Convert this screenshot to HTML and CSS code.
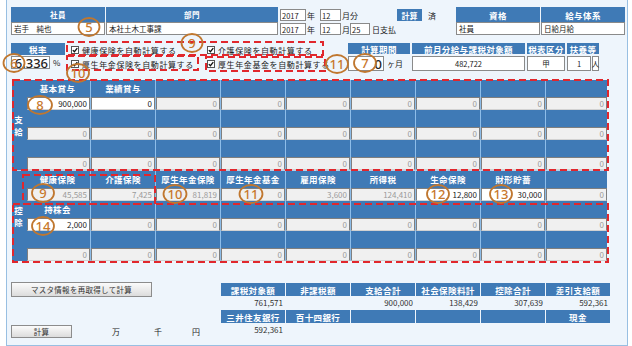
FILE: index.html
```html
<!DOCTYPE html>
<html lang="ja">
<head>
    <meta charset="UTF-8">
    <meta name="viewport" content="width=device-width, initial-scale=1.0">
    <title>給与入力</title>
    <link rel="stylesheet" href="styles.css">
</head>
<body>
<div class="frame">
    <div class="top">
        <div class="pair emp">
            <div class="hd sm">社員</div>
            <div class="hd sm">部門</div>
            <div class="val">岩手　純也</div>
            <div class="val">本社土木工事課</div>
        </div>
        <div class="dates">
            <div class="drow">
                <span class="box w26">2017</span><span class="unit w14">年</span><span class="box w21">12</span><span class="unit w56">月分</span><span class="tag">計算</span><span class="done">済</span>
            </div>
            <div class="drow">
                <span class="box w26">2017</span><span class="unit w14">年</span><span class="box w21">12</span><span class="unit w9">月</span><span class="box w20">25</span><span class="unit pl2">日支払</span>
            </div>
        </div>
        <div class="pair qual">
            <div class="hd">資格</div>
            <div class="hd">給与体系</div>
            <div class="val">社員</div>
            <div class="val">日給月給</div>
        </div>
    </div>

    <div class="mid">
        <div class="rate">
            <div class="hd">税率</div>
            <div class="rrow"><span class="box num w39">6.336</span><span class="pct">%</span></div>
        </div>
        <div class="checks">
            <label class="chk"><svg class="cb" viewBox="0 0 8 8"><rect x="0.5" y="0.5" width="7" height="7"/><path d="M1.8 4.1 L3.4 5.7 L6.3 2.2"/></svg>健康保険を自動計算する</label>
            <label class="chk"><svg class="cb" viewBox="0 0 8 8"><rect x="0.5" y="0.5" width="7" height="7"/><path d="M1.8 4.1 L3.4 5.7 L6.3 2.2"/></svg>介護保険を自動計算する</label>
            <label class="chk"><svg class="cb" viewBox="0 0 8 8"><rect x="0.5" y="0.5" width="7" height="7"/><path d="M1.8 4.1 L3.4 5.7 L6.3 2.2"/></svg>厚生年金保険を自動計算する</label>
            <label class="chk"><svg class="cb" viewBox="0 0 8 8"><rect x="0.5" y="0.5" width="7" height="7"/><path d="M1.8 4.1 L3.4 5.7 L6.3 2.2"/></svg>厚生年金基金を自動計算する</label>
        </div>
        <div class="period">
            <div class="hd">計算期間</div>
            <div class="hd">前月分給与課税対象額</div>
            <div class="hd">税表区分</div>
            <div class="hd">扶養等</div>
            <div class="prow"><span class="box num w36">0</span><span class="pl2">ヶ月</span></div>
            <div class="box cen">482,722</div>
            <div class="box cen">甲</div>
            <div class="prow"><span class="box cen w24">1</span><span class="box cen w7">人</span></div>
        </div>
    </div>

    <div class="panel">
        <div class="sec">
            <div class="side"><span>支</span><span>給</span></div>
            <div class="h">基本賞与</div><div class="h">業績賞与</div><div class="h"></div><div class="h"></div><div class="h"></div><div class="h"></div><div class="h"></div><div class="h"></div><div class="h"></div>
            <div class="c"><span class="f on">900,000</span></div><div class="c"><span class="f on">0</span></div><div class="c"><span class="f">0</span></div><div class="c"><span class="f">0</span></div><div class="c"><span class="f">0</span></div><div class="c"><span class="f">0</span></div><div class="c"><span class="f">0</span></div><div class="c"><span class="f">0</span></div><div class="c"><span class="f">0</span></div>
            <div class="h"></div><div class="h"></div><div class="h"></div><div class="h"></div><div class="h"></div><div class="h"></div><div class="h"></div><div class="h"></div><div class="h"></div>
            <div class="c"><span class="f">0</span></div><div class="c"><span class="f">0</span></div><div class="c"><span class="f">0</span></div><div class="c"><span class="f">0</span></div><div class="c"><span class="f">0</span></div><div class="c"><span class="f">0</span></div><div class="c"><span class="f">0</span></div><div class="c"><span class="f">0</span></div><div class="c"><span class="f">0</span></div>
            <div class="h"></div><div class="h"></div><div class="h"></div><div class="h"></div><div class="h"></div><div class="h"></div><div class="h"></div><div class="h"></div><div class="h"></div>
            <div class="c"><span class="f">0</span></div><div class="c"><span class="f">0</span></div><div class="c"><span class="f">0</span></div><div class="c"><span class="f">0</span></div><div class="c"><span class="f">0</span></div><div class="c"><span class="f">0</span></div><div class="c"><span class="f">0</span></div><div class="c"><span class="f">0</span></div><div class="c"><span class="f">0</span></div>
        </div>
        <div class="sec ded">
            <div class="side"><span>控</span><span>除</span></div>
            <div class="h">健康保険</div><div class="h">介護保険</div><div class="h">厚生年金保険</div><div class="h">厚生年金基金</div><div class="h">雇用保険</div><div class="h">所得税</div><div class="h">生命保険</div><div class="h">財形貯蓄</div><div class="h"></div>
            <div class="c"><span class="f">45,585</span></div><div class="c"><span class="f">7,425</span></div><div class="c"><span class="f">81,819</span></div><div class="c"><span class="f">0</span></div><div class="c"><span class="f">3,600</span></div><div class="c"><span class="f">124,410</span></div><div class="c"><span class="f on">12,800</span></div><div class="c"><span class="f on">30,000</span></div><div class="c"><span class="f">0</span></div>
            <div class="h">持株会</div><div class="h"></div><div class="h"></div><div class="h"></div><div class="h"></div><div class="h"></div><div class="h"></div><div class="h"></div><div class="h"></div>
            <div class="c"><span class="f on">2,000</span></div><div class="c"><span class="f">0</span></div><div class="c"><span class="f">0</span></div><div class="c"><span class="f">0</span></div><div class="c"><span class="f">0</span></div><div class="c"><span class="f">0</span></div><div class="c"><span class="f">0</span></div><div class="c"><span class="f">0</span></div><div class="c"><span class="f">0</span></div>
            <div class="h"></div><div class="h"></div><div class="h"></div><div class="h"></div><div class="h"></div><div class="h"></div><div class="h"></div><div class="h"></div><div class="h"></div>
            <div class="c"><span class="f">0</span></div><div class="c"><span class="f">0</span></div><div class="c"><span class="f">0</span></div><div class="c"><span class="f">0</span></div><div class="c"><span class="f">0</span></div><div class="c"><span class="f">0</span></div><div class="c"><span class="f">0</span></div><div class="c"><span class="f">0</span></div><div class="c"><span class="f">0</span></div>
        </div>
    </div>

    <div class="bottom">
        <div class="acts">
            <button class="btn wide">マスタ情報を再取得して計算</button>
            <div class="calcrow">
                <button class="btn short">計算</button>
                <span class="u1">万</span><span class="u2">千</span><span class="u3">円</span>
            </div>
        </div>
        <div class="sum">
            <div class="hd">課税対象額</div><div class="hd">非課税額</div><div class="hd">支給合計</div><div class="hd">社会保険料計</div><div class="hd">控除合計</div><div class="hd">差引支給額</div>
            <div class="sv">761,571</div><div class="sv"></div><div class="sv">900,000</div><div class="sv">138,429</div><div class="sv">307,639</div><div class="sv">592,361</div>
            <div class="hd">三井住友銀行</div><div class="hd">百十四銀行</div><div class="hd"></div><div class="hd"></div><div class="hd"></div><div class="hd">現金</div>
            <div class="sv">592,361</div><div class="sv"></div><div class="sv"></div><div class="sv"></div><div class="sv"></div><div class="sv"></div>
        </div>
    </div>
</div>

<!-- annotation marks drawn over the screen -->
<svg class="notes" width="632" height="346" viewBox="0 0 632 346">
    <rect class="dash" x="67" y="42" width="256" height="13"/>
    <rect class="dash" x="67" y="56" width="131" height="14"/>
    <rect class="dash" x="206" y="57" width="119" height="14"/>
    <rect class="dash" x="13" y="80" width="595" height="90"/>
    <rect class="dash" x="23" y="175" width="132" height="29"/>
    <rect class="dash" x="13" y="204" width="595" height="58"/>

    <ellipse class="ring" cx="89" cy="27" rx="10.5" ry="9"/><text class="num" x="89" y="27">5</text>
    <ellipse class="ring" cx="14" cy="63" rx="10.5" ry="9"/><text class="num" x="14" y="63">6</text>
    <ellipse class="ring" cx="192" cy="43" rx="10.5" ry="9"/><text class="num" x="192" y="43">9</text>
    <ellipse class="ring" cx="78" cy="73" rx="11" ry="9"/><text class="num" x="78" y="73">10</text>
    <ellipse class="ring" cx="337" cy="64" rx="11" ry="9"/><text class="num" x="337" y="64">11</text>
    <ellipse class="ring" cx="365" cy="63" rx="11" ry="9"/><text class="num" x="365" y="63">7</text>
    <ellipse class="ring" cx="40" cy="105" rx="12" ry="9"/><text class="num" x="40" y="105">8</text>
    <ellipse class="ring" cx="43" cy="193" rx="11" ry="9"/><text class="num" x="43" y="193">9</text>
    <ellipse class="ring" cx="175" cy="194" rx="11.5" ry="9"/><text class="num" x="175" y="194">10</text>
    <ellipse class="ring" cx="251" cy="194" rx="11.5" ry="9"/><text class="num" x="251" y="194">11</text>
    <ellipse class="ring" cx="438" cy="194" rx="11" ry="9"/><text class="num" x="438" y="194">12</text>
    <ellipse class="ring" cx="501" cy="194" rx="11" ry="9"/><text class="num" x="501" y="194">13</text>
    <ellipse class="ring" cx="43" cy="226" rx="11" ry="9"/><text class="num" x="43" y="226">14</text>
</svg>
</body>
</html>
```

FILE: styles.css
```css
*{
    margin: 0;
    padding: 0;
    box-sizing: border-box;
}
body{
    width: 632px;
    height: 346px;
    overflow: hidden;
    position: relative;
    background: #fff;
    font-family: "Noto Sans CJK JP", "Noto Sans", sans-serif;
    font-size: 8px;
    color: #222;
}
.frame{
    margin-left: 6px;
    width: 622px;
    height: 346px;
    background: #eef5fc;
    border: 1px solid #98bfe2;
    border-top: none;
    padding: 7px 0 0 4px;
}
.hd{
    background: #3f7ab6;
    color: #fff;
    font-weight: bold;
    font-size: 8.5px;
    letter-spacing: .4px;
    white-space: nowrap;
    display: flex;
    align-items: center;
    justify-content: center;
}
.hd.sm{
    font-size: 7.5px;
}
.box{
    display: flex;
    align-items: center;
    background: #fff;
    border: 1px solid #8a8a8a;
    font-size: 7.5px;
    padding: 0 1px;
    height: 12px;
    white-space: nowrap;
}
.box.num{
    justify-content: flex-end;
}
.box.cen{
    justify-content: center;
}

/* top row */
.top{
    display: flex;
    height: 28px;
}
.pair{
    display: grid;
    grid-template-rows: 15px 13px;
    column-gap: 1px;
}
.emp{
    grid-template-columns: 94px 172px;
}
.qual{
    grid-template-columns: 84px 84px;
}
.pair .val{
    background: #fff;
    border: 1px solid #8a8a8a;
    font-size: 7.5px;
    padding-left: 2px;
    display: flex;
    align-items: center;
}
.dates{
    width: 178px;
    padding: 2px 0 0 2px;
}
.drow{
    display: flex;
    align-items: center;
    height: 12px;
}
.drow + .drow{
    margin-top: 2px;
}
.unit{
    padding-left: 1px;
    white-space: nowrap;
}
.w7{ width: 7px; }
.w9{ width: 9px; }
.w14{ width: 14px; }
.w20{ width: 20px; }
.w21{ width: 21px; }
.w24{ width: 24px; }
.w26{ width: 26px; }
.w36{ width: 36px; }
.w39{ width: 39px; }
.w56{ width: 56px; }
.pl2{ padding-left: 2px; }
.tag{
    width: 25px;
    height: 12px;
    background: #3f7ab6;
    color: #fff;
    font-weight: bold;
    display: flex;
    align-items: center;
    justify-content: center;
}
.done{
    padding-left: 6px;
}

/* tax rate, checks, period */
.mid{
    display: flex;
    height: 30px;
    margin-top: 8px;
}
.rate{
    width: 54px;
}
.rate .hd{
    height: 12px;
}
.rrow{
    display: flex;
    align-items: center;
    margin-top: 1px;
}
.rrow .box{
    height: 13px;
}
.pct{
    padding-left: 3px;
}
.checks{
    width: 280px;
    margin-left: 3px;
    padding: 1px 0 0 3px;
    display: grid;
    grid-template-columns: 136px 1fr;
    grid-template-rows: 12px 12px;
    row-gap: 2px;
}
.chk{
    display: flex;
    align-items: center;
    gap: 3px;
    font-size: 8px;
    letter-spacing: .6px;
    white-space: nowrap;
}
.cb{
    width: 8px;
    height: 8px;
    flex: none;
}
.cb rect{
    fill: #fff;
    stroke: #555;
    stroke-width: 1;
}
.cb path{
    fill: none;
    stroke: #111;
    stroke-width: 1.3;
}
.period{
    display: grid;
    grid-template-columns: 62px 113px 38px 32px;
    grid-template-rows: 11px 15px;
    column-gap: 2px;
    row-gap: 2px;
}
.period > .box{
    height: 15px;
}
.prow{
    display: flex;
    align-items: center;
    gap: 1px;
}
.prow .box{
    height: 15px;
}

/* pay / deduction panel */
.panel{
    margin: 7px 0 0 1px;
    width: 595px;
    background: #3f7ab6;
}
.sec{
    display: grid;
    grid-template-columns: 13px repeat(8, 65px) 62px;
    grid-template-rows: 16px 14px 16px 14px 16px 14px;
}
.ded{
    border-top: 1px solid #b5d2ec;
}
.side{
    grid-row: 1 / 7;
    display: flex;
    flex-direction: column;
    justify-content: center;
    align-items: center;
    color: #fff;
    font-weight: bold;
    font-size: 8.5px;
    line-height: 12px;
}
.h, .c{
    border-left: 1px solid #8dbde9;
}
.sec > :nth-child(9n+2){
    border-left: none;
}
.h{
    color: #fff;
    font-weight: bold;
    font-size: 8.5px;
    letter-spacing: .4px;
    text-align: center;
    line-height: 16px;
    white-space: nowrap;
}
.f{
    display: block;
    height: 13px;
    margin-top: 1px;
    background: #f0f0f0;
    border: 1px solid #7f7f7f;
    border-bottom-color: #d2d2d2;
    color: #9a9a9a;
    text-align: right;
    padding-right: 2px;
    font-size: 8px;
    line-height: 11px;
}
.f.on{
    background: #fff;
    color: #222;
}
.sec > :nth-child(9n+2) .f{
    margin-left: 2px;
}

/* bottom */
.bottom{
    display: flex;
    margin-top: 21px;
}
.acts{
    width: 210px;
}
.btn{
    display: block;
    background: linear-gradient(#fbfbfb, #dcdcdc);
    border: 1px solid #8c8c8c;
    font-family: inherit;
    font-size: 7.5px;
    letter-spacing: .3px;
    color: #333;
}
.wide{
    width: 141px;
    height: 15px;
}
.calcrow{
    display: flex;
    align-items: center;
    margin-top: 28px;
}
.short{
    width: 61px;
    height: 13px;
}
.u1{ margin-left: 40px; }
.u2{ margin-left: 34px; }
.u3{ margin-left: 30px; }
.sum{
    margin-top: 1px;
    display: grid;
    grid-template-columns: repeat(6, 64px);
    grid-template-rows: 13px 14px 13px 17px;
    column-gap: 1px;
}
.sv{
    text-align: right;
    padding-right: 2px;
    font-size: 8px;
    line-height: 14px;
    color: #333;
}

/* annotation marks */
.notes{
    position: absolute;
    left: 0;
    top: 0;
    pointer-events: none;
}
.dash{
    fill: none;
    stroke: #e1272d;
    stroke-width: 2;
    stroke-dasharray: 7 4;
}
.ring{
    fill: none;
    stroke: #c0772f;
    stroke-width: 1.8;
}
.num{
    fill: #c8782c;
    font-family: "Noto Sans", sans-serif;
    font-size: 13px;
    font-weight: 500;
    text-anchor: middle;
    dominant-baseline: central;
}
```
